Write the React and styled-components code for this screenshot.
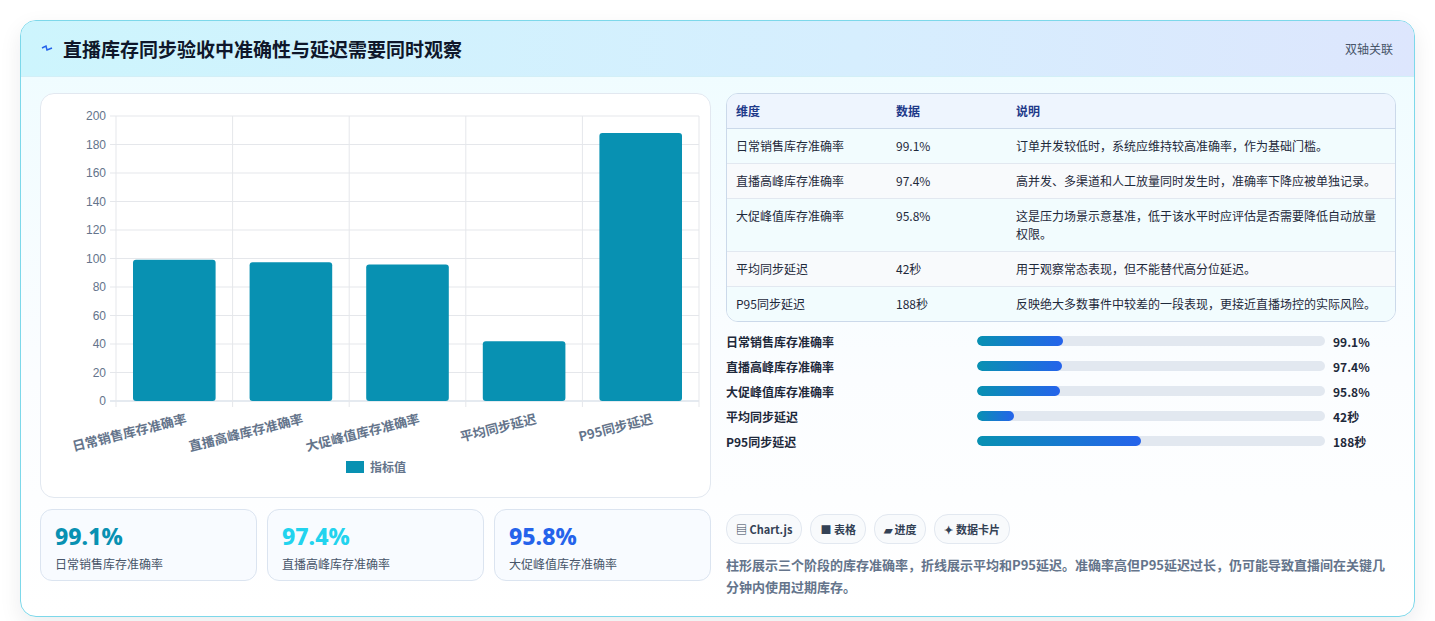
import React from 'react';
import styled, { createGlobalStyle } from 'styled-components';

const GlobalStyle = createGlobalStyle`
  html, body { margin: 0; padding: 0; background: #ffffff; }
  body { font-family: "Noto Sans CJK SC", "Noto Sans", sans-serif; color: #1e293b; }
`;

const metrics = [
  { label: '日常销售库存准确率', value: 99.1, text: '99.1%', note: '订单并发较低时，系统应维持较高准确率，作为基础门槛。' },
  { label: '直播高峰库存准确率', value: 97.4, text: '97.4%', note: '高并发、多渠道和人工放量同时发生时，准确率下降应被单独记录。' },
  { label: '大促峰值库存准确率', value: 95.8, text: '95.8%', note: '这是压力场景示意基准，低于该水平时应评估是否需要降低自动放量权限。' },
  { label: '平均同步延迟', value: 42, text: '42秒', note: '用于观察常态表现，但不能替代高分位延迟。' },
  { label: 'P95同步延迟', value: 188, text: '188秒', note: '反映绝大多数事件中较差的一段表现，更接近直播场控的实际风险。' },
];

const Page = styled.div`
  padding: 20px 20px 22px 20px;
`;

const Card = styled.div`
  border: 1px solid #7dd8ea;
  border-radius: 16px;
  overflow: hidden;
  background: linear-gradient(180deg, #eefcff 0%, #fbfdff 60%, #ffffff 100%);
  box-shadow: 0 8px 22px rgba(15, 23, 42, 0.08);
`;

const Header = styled.div`
  height: 55px;
  display: flex;
  align-items: center;
  justify-content: space-between;
  padding: 0 21px 0 20px;
  background: linear-gradient(90deg, #cdf5fd 0%, #d6eefe 60%, #dde6fd 100%);
  border-bottom: 1px solid #d2eff7;
`;

const Title = styled.h1`
  margin: 0;
  font-size: 19px;
  font-weight: 700;
  color: #0f172a;
  display: flex;
  align-items: center;
  gap: 10px;
`;

const Tag = styled.span`
  font-size: 12px;
  color: #475569;
`;

const Body = styled.div`
  display: grid;
  grid-template-columns: 671px 670px;
  gap: 15px;
  padding: 16px 20px 18px 19px;
`;

const Col = styled.div`
  display: flex;
  flex-direction: column;
`;

const ChartBox = styled.div`
  height: 403px;
  border: 1px solid #e2e8f0;
  border-radius: 14px;
  background: #ffffff;
`;

const Stats = styled.div`
  display: grid;
  grid-template-columns: repeat(3, 1fr);
  gap: 10px;
  margin-top: 11px;
`;

const StatCard = styled.div`
  height: 72px;
  box-sizing: border-box;
  border: 1px solid #dbe4f0;
  border-radius: 12px;
  background: #f8fbff;
  padding: 12px 14px;
`;

const StatValue = styled.div`
  font-size: 23px;
  font-weight: 800;
  line-height: 28px;
  color: ${(p) => p.color};
  font-family: "Noto Sans", "Noto Sans CJK SC", sans-serif;
`;

const StatLabel = styled.div`
  font-size: 12px;
  color: #475569;
  margin-top: 5px;
`;

const TableWrap = styled.div`
  border: 1px solid #cbd9ea;
  border-radius: 12px;
  overflow: hidden;
`;

const Table = styled.table`
  width: 100%;
  border-collapse: collapse;
  font-size: 12px;
  td, th { text-align: left; padding: 8px 9px; vertical-align: top; line-height: 18px; }
  th { background: #eef5fe; color: #1e3a8a; font-weight: 600; border-bottom: 1px solid #cbd9ea; height: 17px; }
  td { color: #1e293b; border-bottom: 1px solid #e2e8f0; }
  tr:last-child td { border-bottom: none; }
  tbody tr:nth-child(odd) td { background: #f2fcfe; }
  tbody tr:nth-child(even) td { background: #f8fafc; }
`;

const Bars = styled.div`
  margin-top: 10px;
  display: flex;
  flex-direction: column;
  gap: 7px;
`;

const BarRow = styled.div`
  display: grid;
  grid-template-columns: 251px 348px 1fr;
  align-items: center;
  gap: 0;
  height: 18px;
  font-size: 12px;
  font-weight: 600;
  color: #1e293b;
`;

const Track = styled.div`
  height: 10px;
  border-radius: 5px;
  background: #e2e8f0;
  overflow: hidden;
`;

const Fill = styled.div`
  height: 100%;
  border-radius: 5px;
  background: linear-gradient(90deg, #0891b2, #2563eb);
`;

const BarValue = styled.span`
  padding-left: 8px;
  font-weight: 700;
`;

const Chips = styled.div`
  display: flex;
  gap: 8px;
  margin-top: 64px;
`;

const Chip = styled.span`
  font-size: 11px;
  font-weight: 600;
  color: #334155;
  border: 1px solid #e2e8f0;
  background: #f8fafc;
  border-radius: 14px;
  padding: 6px 9px;
`;

const Note = styled.p`
  margin: 10px 0 0;
  font-size: 13px;
  line-height: 22px;
  font-weight: 600;
  color: #64748b;
`;

const Chart = () => {
  const left = 75, right = 658, top = 22, bottom = 307;
  const h = bottom - top;
  const w = (right - left) / 5;
  const ticks = [0, 20, 40, 60, 80, 100, 120, 140, 160, 180, 200];
  return (
    <svg width="669" height="401" style={{ display: 'block' }}>
      {ticks.map((t) => {
        const y = bottom - (t / 200) * h;
        return (
          <g key={t}>
            <line x1={left - 6} x2={right} y1={y} y2={y} stroke={t === 0 ? '#cbd5e1' : '#e5e7eb'} />
            <text x={left - 10} y={y + 4} textAnchor="end" fontSize="12" fill="#64748b" fontFamily="Liberation Sans, sans-serif">{t}</text>
          </g>
        );
      })}
      {[0, 1, 2, 3, 4, 5].map((i) => (
        <line key={i} x1={left + i * w} x2={left + i * w} y1={top} y2={bottom + 6} stroke="#e5e7eb" />
      ))}
      {metrics.map((m, i) => {
        const bh = (m.value / 200) * h;
        const x = left + i * w + 17;
        return (
          <g key={m.label}>
            <rect x={x} y={bottom - bh} width={w - 34} height={bh} rx="3" fill="#0891b2" />
            <text
              transform={`translate(${left + i * w + w / 2 + 13}, ${bottom + 22}) rotate(-14)`}
              textAnchor="end" fontSize="13" fontWeight="600" fill="#64748b"
            >{m.label}</text>
          </g>
        );
      })}
      <rect x="305" y="367" width="18" height="12" fill="#0891b2" />
      <text x="329" y="378" fontSize="12" fontWeight="600" fill="#64748b">指标值</text>
    </svg>
  );
};

export default function App() {
  return (
    <Page>
      <GlobalStyle />
      <Card>
        <Header>
          <Title>
            <svg width="12" height="12" viewBox="0 0 12 12">
              <path d="M1 5 L5 3 L6 7 L11 5" stroke="#2563eb" strokeWidth="1.5" fill="none" />
            </svg>
            直播库存同步验收中准确性与延迟需要同时观察
          </Title>
          <Tag>双轴关联</Tag>
        </Header>
        <Body>
          <Col>
            <ChartBox><Chart /></ChartBox>
            <Stats>
              <StatCard><StatValue color="#0891b2">99.1%</StatValue><StatLabel>日常销售库存准确率</StatLabel></StatCard>
              <StatCard><StatValue color="#22d3ee">97.4%</StatValue><StatLabel>直播高峰库存准确率</StatLabel></StatCard>
              <StatCard><StatValue color="#2563eb">95.8%</StatValue><StatLabel>大促峰值库存准确率</StatLabel></StatCard>
            </Stats>
          </Col>
          <Col>
            <TableWrap>
              <Table>
                <colgroup><col style={{ width: 160 }} /><col style={{ width: 120 }} /><col /></colgroup>
                <thead><tr><th>维度</th><th>数据</th><th>说明</th></tr></thead>
                <tbody>
                  {metrics.map((m) => (
                    <tr key={m.label}><td>{m.label}</td><td>{m.text}</td><td>{m.note}</td></tr>
                  ))}
                </tbody>
              </Table>
            </TableWrap>
            <Bars>
              {metrics.map((m) => (
                <BarRow key={m.label}>
                  <span>{m.label}</span>
                  <Track><Fill style={{ width: `${(m.value / 400) * 100}%` }} /></Track>
                  <BarValue>{m.text}</BarValue>
                </BarRow>
              ))}
            </Bars>
            <Chips>
              <Chip>▤ Chart.js</Chip>
              <Chip>■ 表格</Chip>
              <Chip>▰ 进度</Chip>
              <Chip>✦ 数据卡片</Chip>
            </Chips>
            <Note>柱形展示三个阶段的库存准确率，折线展示平均和P95延迟。准确率高但P95延迟过长，仍可能导致直播间在关键几分钟内使用过期库存。</Note>
          </Col>
        </Body>
      </Card>
    </Page>
  );
}
